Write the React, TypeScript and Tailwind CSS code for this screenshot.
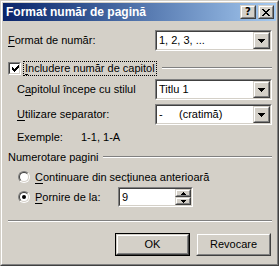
import React from "react";

const FONT = "font-['Liberation_Sans',Arial,sans-serif] text-[11px] leading-[13px] text-black";

function Raised({ className = "", children }: { className?: string; children?: React.ReactNode }) {
  return (
    <div className={`border border-t-[#d4d0c8] border-l-[#d4d0c8] border-r-[#404040] border-b-[#404040] ${className}`}>
      <div className="flex h-full w-full items-center justify-center border border-t-white border-l-white border-r-[#808080] border-b-[#808080] bg-[#d4d0c8]">
        {children}
      </div>
    </div>
  );
}

function Sunken({ className = "", children }: { className?: string; children?: React.ReactNode }) {
  return (
    <div className={`border border-t-[#808080] border-l-[#808080] border-r-white border-b-white ${className}`}>
      <div className="flex h-full w-full items-center border border-t-[#404040] border-l-[#404040] border-r-[#d4d0c8] border-b-[#d4d0c8] bg-white">
        {children}
      </div>
    </div>
  );
}

const DownArrow = () => (
  <svg width="7" height="4" shapeRendering="crispEdges">
    <rect x="0" y="0" width="7" height="1" fill="black" />
    <rect x="1" y="1" width="5" height="1" fill="black" />
    <rect x="2" y="2" width="3" height="1" fill="black" />
    <rect x="3" y="3" width="1" height="1" fill="black" />
  </svg>
);

const SmallArrow = ({ up }: { up?: boolean }) => (
  <svg width="5" height="3" shapeRendering="crispEdges" className={up ? "rotate-180" : ""}>
    <rect x="0" y="0" width="5" height="1" fill="black" />
    <rect x="1" y="1" width="3" height="1" fill="black" />
    <rect x="2" y="2" width="1" height="1" fill="black" />
  </svg>
);

function Combo({ children }: { children: React.ReactNode }) {
  return (
    <Sunken className="h-[21px] w-[117px] shrink-0">
      <div className="flex-1 pl-[2px]">{children}</div>
      <Raised className="h-full w-[17px]">
        <DownArrow />
      </Raised>
    </Sunken>
  );
}

function Etched({ className = "" }: { className?: string }) {
  return <div className={`h-[2px] border-t border-t-[#808080] border-b border-b-white ${className}`} />;
}

function Radio({ checked }: { checked?: boolean }) {
  return (
    <div className="h-[12px] w-[12px] shrink-0 rounded-full border border-t-[#808080] border-l-[#808080] border-r-white border-b-white">
      <div className="flex h-full w-full items-center justify-center rounded-full border border-t-[#404040] border-l-[#404040] border-r-[#d4d0c8] border-b-[#d4d0c8] bg-white">
        {checked && <div className="h-[4px] w-[4px] rounded-full bg-black" />}
      </div>
    </div>
  );
}

const U = ({ children }: { children: React.ReactNode }) => <span className="underline underline-offset-[2px]">{children}</span>;

export default function App() {
  return (
    <div className={`h-[266px] w-[279px] border border-t-[#d4d0c8] border-l-[#d4d0c8] border-r-[#404040] border-b-[#404040] ${FONT}`}>
      <div className="flex h-full w-full flex-col border border-t-white border-l-white border-r-[#808080] border-b-[#808080] bg-[#d4d0c8] p-px">
        {/* title bar */}
        <div className="flex h-[18px] shrink-0 items-center bg-gradient-to-r from-[#0a246a] to-[#a6caf0] pl-[3px] pr-[2px]">
          <span className="flex-1 text-[12px] font-bold text-white">Format număr de pagină</span>
          <Raised className="h-[14px] w-[16px]">
            <span className="font-['DejaVu_Sans',sans-serif] text-[10px] font-bold leading-none">?</span>
          </Raised>
          <Raised className="ml-[2px] h-[14px] w-[16px]">
            <svg width="8" height="7" shapeRendering="crispEdges">
              {[0, 1, 2, 3, 4, 5, 6].map((i) => (
                <g key={i}>
                  <rect x={i} y={i} width="2" height="1" fill="black" />
                  <rect x={6 - i} y={i} width="2" height="1" fill="black" />
                </g>
              ))}
            </svg>
          </Raised>
        </div>

        {/* body */}
        <div className="flex flex-1 flex-col pl-[5px] pr-[4px]">
          <div className="mt-[9px] flex items-center">
            <span className="flex-1">
              <U>F</U>ormat de număr:
            </span>
            <Combo>1, 2, 3, ...</Combo>
          </div>

          <div className="mt-[10px] flex h-[14px] items-center">
            <Sunken className="h-[13px] w-[13px] shrink-0">
              <svg width="7" height="7" shapeRendering="crispEdges" className="ml-[2px]">
                {[2, 3, 4, 3, 2, 1, 0].map((y, x) => (
                  <rect key={x} x={x} y={y} width="1" height="3" fill="black" />
                ))}
              </svg>
            </Sunken>
            <span className="ml-[2px] border border-dotted border-black px-px">
              <U>I</U>ncludere număr de capitol
            </span>
            <Etched className="ml-[5px] flex-1" />
          </div>

          <div className="mt-[4px] flex items-center pl-[9px]">
            <span className="flex-1">
              C<U>a</U>pitolul începe cu stilul
            </span>
            <Combo>Titlu 1</Combo>
          </div>

          <div className="mt-[4px] flex items-center pl-[9px]">
            <span className="flex-1">
              <U>U</U>tilizare separator:
            </span>
            <Combo>
              <span className="inline-block w-[20px]">-</span>(cratimă)
            </Combo>
          </div>

          <div className="mt-[6px] flex items-center pl-[9px]">
            <span className="w-[64px]">Exemple:</span>
            <span>1-1, 1-A</span>
          </div>

          <div className="mt-[6px] flex h-[14px] items-center">
            <span>Numerotare pagini</span>
            <Etched className="ml-[4px] flex-1" />
          </div>

          <div className="mt-[6px] flex h-[14px] items-center pl-[10px]">
            <Radio />
            <span className="ml-[5px]">
              <U>C</U>ontinuare din secțiunea anterioară
            </span>
          </div>

          <div className="mt-[3px] flex items-center pl-[10px]">
            <Radio checked />
            <span className="ml-[5px] w-[83px]">
              <U>P</U>ornire de la:
            </span>
            <Sunken className="h-[20px] w-[75px]">
              <span className="flex-1 pl-[2px]">9</span>
              <div className="flex h-full w-[16px] flex-col">
                <Raised className="h-1/2 w-full">
                  <SmallArrow up />
                </Raised>
                <Raised className="h-1/2 w-full">
                  <SmallArrow />
                </Raised>
              </div>
            </Sunken>
          </div>

          <Etched className="mt-[13px]" />

          <div className="mt-[11px] flex justify-end gap-[6px] pr-px">
            <div className="h-[23px] w-[75px] border border-black">
              <Raised className="h-full w-full">OK</Raised>
            </div>
            <Raised className="h-[23px] w-[75px]">Revocare</Raised>
          </div>
        </div>
      </div>
    </div>
  );
}
